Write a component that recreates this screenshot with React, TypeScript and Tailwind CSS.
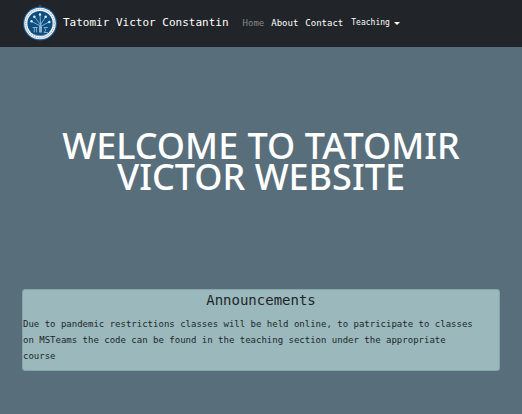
import React from 'react';

interface NavItem {
    label: string;
    href: string;
    active?: boolean;
}

const navItems: NavItem[] = [
    { label: 'Home', href: '#home', active: true },
    { label: 'About', href: '#about' },
    { label: 'Contact', href: '#contact' },
];

const LogoMark: React.FC = () => (
    <svg viewBox="0 0 36 38" className="w-9 h-[38px] shrink-0" aria-hidden="true">
        <circle cx="18" cy="2" r="1.2" fill="#245a80" />
        <circle cx="18" cy="19.5" r="17" fill="#1d5c8d" />
        <circle cx="18" cy="19.5" r="15.8" fill="#eef3f6" />
        <circle cx="18" cy="19.5" r="14.3" fill="none" stroke="#9fb4c4" strokeWidth="1.2" strokeDasharray="1.2 1" />
        <circle cx="18" cy="19.5" r="12.6" fill="#0d4d80" />
        <g stroke="#8fb5cf" strokeWidth="0.9" fill="none" strokeLinecap="round">
            <path d="M17.500 28V21.500L9.500 17.500M18 28V20L12.500 13M18.500 28V19L18 10.500M19 28V20L23.500 13M19.500 28V22L27 18" />
            <path d="M12.300 28V23.500M11 23.500H15.300M14.500 23.500V28M25.500 23.500H22L24 26L22 28.500H25.500" />
            <path d="M12 30.500Q18 33 24 30.500" strokeDasharray="1.3 1" />
        </g>
        <g fill="#dce9f1">
            <circle cx="9.500" cy="17.300" r="1.200" />
            <circle cx="12.300" cy="12.800" r="1.300" />
            <circle cx="18" cy="10.500" r="1.200" />
            <circle cx="23.700" cy="12.800" r="1.300" />
            <circle cx="27.300" cy="18" r="1.200" />
        </g>
    </svg>
);

const Navbar: React.FC = () => (
    <nav className="flex items-center bg-[#212529] px-[22px] pt-1 pb-[5px] text-white">
        <a href="#home" className="flex items-center gap-[5px] text-[11px] leading-5 whitespace-nowrap">
            <LogoMark />
            Tatomir Victor Constantin
        </a>
        <ul className="flex items-center gap-[7px] ml-[14px] text-[9px] leading-4">
            {navItems.map(item => (
                <li key={item.label}>
                    <a href={item.href} className={item.active ? 'text-[#85888a]' : 'text-white'}>
                        {item.label}
                    </a>
                </li>
            ))}
        </ul>
        <button type="button" aria-haspopup="true" className="flex items-center gap-1 ml-2 text-[8px] leading-4">
            Teaching
            <span className="border-x-[3px] border-t-[3px] border-x-transparent border-t-white" />
        </button>
    </nav>
);

const App: React.FC = () => {
    return (
        <div className="min-h-screen bg-[#586f7b] font-['Consolas','DejaVu_Sans_Mono',monospace] text-[#212529]">
            <Navbar />
            <header className="px-10 pt-[83px] pb-[97px]">
                <h1 className="text-center text-[36px] leading-[31px] font-medium text-white font-['Comic_Sans_MS','Noto_Sans',sans-serif]">
                    WELCOME TO TATOMIR VICTOR WEBSITE
                </h1>
            </header>
            <main className="px-[22px]">
                <section className="rounded-[3px] border border-[#86a4aa] bg-[#9bb9bd] pb-[6px]">
                    <h2 className="mb-[6px] text-center text-[14px] leading-5">Announcements</h2>
                    <p className="pr-5 text-[9px] leading-4">
                        Due to pandemic restrictions classes will be held online, to patricipate to classes
                        on MSTeams the code can be found in the teaching section under the appropriate
                        course
                    </p>
                </section>
            </main>
        </div>
    );
};

export default App;
